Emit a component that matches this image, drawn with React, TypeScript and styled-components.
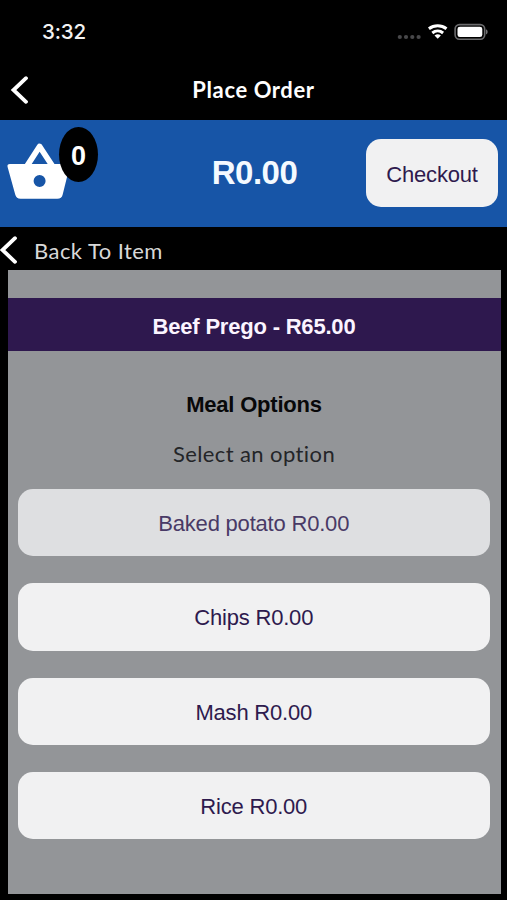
import React from "react";
import styled, { createGlobalStyle } from "styled-components";

const GlobalStyle = createGlobalStyle`
  * { box-sizing: border-box; }
  html, body { margin: 0; background: #000; }
  button { border: 0; padding: 0; margin: 0; background: none; font: inherit; color: inherit; }
`;

const sans = `"Liberation Sans", Arial, sans-serif`;
const display = `Lato, sans-serif`;

const Screen = styled.main`
  display: flex;
  flex-direction: column;
  width: 507px;
  height: 900px;
  overflow: hidden;
  background: #000;
  font-family: ${sans};
`;

const StatusBar = styled.header`
  display: flex;
  justify-content: space-between;
  height: 61px;
  padding: 20px 19px 0 42px;
`;

const Clock = styled.time`
  font: 500 20.5px/24px Inter, sans-serif;
  letter-spacing: -0.1px;
  color: #f2f2f2;
`;

const StatusIcons = styled.svg`
  display: block;
  width: 92px;
  height: 24px;
`;

const NavBar = styled.nav`
  display: grid;
  grid-template-columns: 40px 1fr 40px;
  align-items: center;
  height: 58.5px;
`;

const BackButton = styled.button`
  display: flex;
  padding-left: 10px;
`;

const Title = styled.h1`
  margin: 0;
  text-align: center;
  font: 700 22px/28px ${display};
  letter-spacing: 0.6px;
  color: #fff;
`;

const CartBar = styled.section`
  display: grid;
  grid-template-columns: 141px 1fr 141px;
  align-items: center;
  height: 107.5px;
  background: #1755a7;
`;

const Basket = styled.div`
  position: relative;
  align-self: start;
  width: 100px;
  height: 90px;
  svg { display: block; }
`;

const Count = styled.span`
  position: absolute;
  left: 59px;
  top: 7px;
  width: 39px;
  height: 55px;
  border-radius: 50%;
  background: #000;
  color: #fff;
  text-align: center;
  font: 700 27px/59px ${sans};
`;

const Total = styled.strong`
  text-align: center;
  padding-left: 2px;
  font-size: 33px;
  line-height: 40px;
  letter-spacing: -0.5px;
  color: #f4faff;
`;

const Pill = styled.button<{ $dimmed?: boolean }>`
  height: 67.5px;
  padding-top: 3px;
  border-radius: 15px;
  background: ${(p) => (p.$dimmed ? "#dedfe1" : "#f1f1f2")};
  color: ${(p) => (p.$dimmed ? "#493a66" : "#2e1a4e")};
  font: 400 22px/26px ${sans};
  letter-spacing: -0.2px;
`;

const Checkout = styled(Pill)`
  width: 132px;
  height: 68px;
`;

const BackRow = styled.div`
  display: flex;
  align-items: center;
  gap: 17px;
  height: 43px;
  padding-top: 3px;
  margin-left: -1px;
`;

const BackLabel = styled.span`
  padding-top: 1px;
  font: 400 22px/28px ${display};
  letter-spacing: 0.45px;
  color: #d8d8d8;
`;

const Panel = styled.section`
  display: flex;
  flex-direction: column;
  height: 623.5px;
  margin: 0 6.5px 0 7.5px;
  padding-top: 27.5px;
  background: #939598;
`;

const ItemBanner = styled.h2`
  margin: 0;
  height: 53.5px;
  background: #2e184e;
  color: #fbf4ff;
  text-align: center;
  font: 700 22px/57px ${sans};
  letter-spacing: -0.2px;
`;

const Heading = styled.h3`
  margin: 41px 0 0;
  color: #080809;
  text-align: center;
  font: 700 22px/26px ${sans};
  letter-spacing: -0.2px;
`;

const Hint = styled.p`
  margin: 22px 0 0;
  color: #242528;
  text-align: center;
  font: 400 22px/28px ${display};
  font-variant-ligatures: none;
  letter-spacing: 0.4px;
`;

const Options = styled.div`
  display: flex;
  flex-direction: column;
  gap: 26.9px;
  padding: 20.8px 11px 0 10.5px;
`;

const options = [
  { label: "Baked potato R0.00", dimmed: true },
  { label: "Chips R0.00" },
  { label: "Mash R0.00" },
  { label: "Rice R0.00" },
];

function Chevron() {
  return (
    <svg width="18" height="28" viewBox="0 0 18 28" fill="none">
      <path d="M16 2.2 3.5 14 16 25.8" stroke="#fff" strokeWidth="3.8" strokeLinecap="round" strokeLinejoin="miter" />
    </svg>
  );
}

function DeviceStatus() {
  return (
    <StatusIcons viewBox="0 0 92 24">
      <g fill="#48484a">
        <circle cx="3.8" cy="17" r="2.1" />
        <circle cx="10" cy="17" r="2.1" />
        <circle cx="16.3" cy="17" r="2.1" />
        <circle cx="22.6" cy="17" r="2.1" />
      </g>
      <g transform="translate(1.7 0)">
        <g fill="none" stroke="#fff" strokeWidth="3">
          <path d="M31.2 8.7a14.4 14.4 0 0 1 17.6 0" />
          <path d="M34.6 13a8.6 8.6 0 0 1 10.8 0" />
        </g>
        <path d="M40 18.8 36.8 15.6a5 5 0 0 1 6.4 0Z" fill="#fff" />
        <rect x="57.4" y="4.6" width="29.6" height="14.6" rx="4.4" fill="none" stroke="#6b6b6d" strokeWidth="1.6" />
        <rect x="59.8" y="6.7" width="24.8" height="10.4" rx="2.4" fill="#fff" />
        <path d="M88.4 9.3a3 3 0 0 1 0 5.2Z" fill="#858587" />
      </g>
    </StatusIcons>
  );
}

function BasketIcon() {
  return (
    <svg width="76" height="84" viewBox="0 0 76 84">
      <path d="M27 46 39.6 26.5 52.4 46" fill="none" stroke="#fff" strokeWidth="5.8" strokeLinejoin="round" />
      <path
        fillRule="evenodd"
        fill="#fff"
        d="M10 44H67Q70.3 44 69.5 47L62.7 74.5Q61.7 78.8 57.3 78.8H20.5Q16.4 78.8 15.3 74.7L7.6 47Q6.8 44 10 44ZM39.6 55a6 6 0 1 0 0 12 6 6 0 0 0 0-12Z"
      />
    </svg>
  );
}

export default function App() {
  return (
    <>
      <GlobalStyle />
      <Screen>
        <StatusBar>
          <Clock>3:32</Clock>
          <DeviceStatus />
        </StatusBar>
        <NavBar>
          <BackButton aria-label="Back"><Chevron /></BackButton>
          <Title>Place Order</Title>
        </NavBar>
        <CartBar>
          <Basket>
            <BasketIcon />
            <Count>0</Count>
          </Basket>
          <Total>R0.00</Total>
          <Checkout>Checkout</Checkout>
        </CartBar>
        <BackRow>
          <Chevron />
          <BackLabel>Back To Item</BackLabel>
        </BackRow>
        <Panel>
          <ItemBanner>Beef Prego - R65.00</ItemBanner>
          <Heading>Meal Options</Heading>
          <Hint>Select an option</Hint>
          <Options>
            {options.map((o) => (
              <Pill key={o.label} $dimmed={o.dimmed}>{o.label}</Pill>
            ))}
          </Options>
        </Panel>
      </Screen>
    </>
  );
}
